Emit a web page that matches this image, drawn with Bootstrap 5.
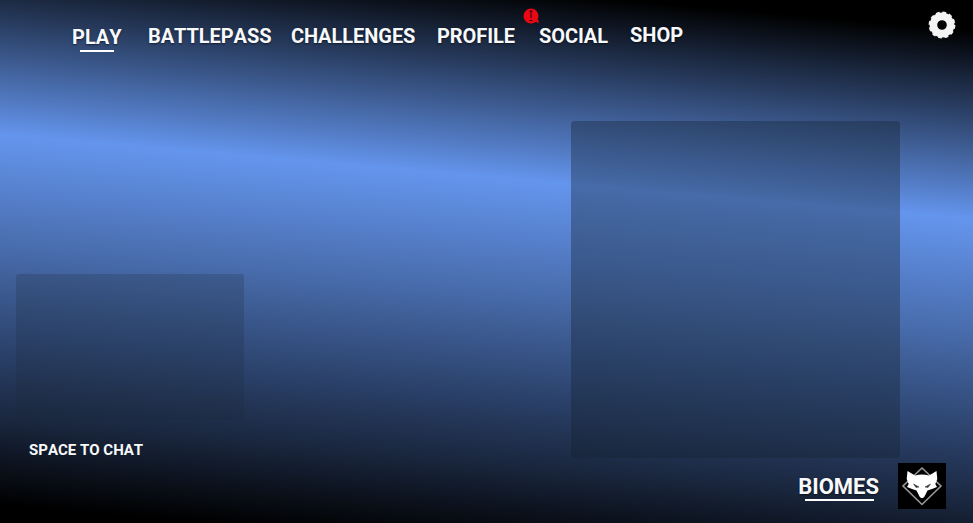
<!DOCTYPE html>
<html lang="en">
<head>
<meta charset="utf-8">
<meta name="viewport" content="width=device-width, initial-scale=1">
<title>Game Lobby</title>
<link href="https://cdn.jsdelivr.net/npm/bootstrap@5.3.0/dist/css/bootstrap.min.css" rel="stylesheet">
<style>
body{font-family:Roboto,"Liberation Sans",sans-serif;font-weight:700;font-kerning:none;color:#f8f9fb;background:#000}
.lobby{height:523px;background:linear-gradient(184.95deg,#000 0,#000 5%,#6495ed 36.1%,#4b70b2 53%,#2c436d 71%,#18243a 84%,#000 97%)}
.topbar{height:68px;padding:21px 16px 0 72px}
.menu-tab{font-size:20px;line-height:30px;color:inherit;text-decoration:none;white-space:nowrap;text-shadow:0 1px 2px #0008}
.menu-tab span{display:block}
.tab-play{width:76px;padding-top:1px}
.tab-pass{width:143px;letter-spacing:-.05px}
.tab-chal{width:146px;letter-spacing:-.05px}
.tab-prof{width:102px;letter-spacing:-.05px}
.tab-soc{width:91px;letter-spacing:-.05px}
.tab-shop{margin-top:-1px}
.rule{height:2px;background:#fff}
.rule-play{width:34px;margin:-2px 0 0 8px}
.alert-dot{left:-16px;top:-13px;width:16px;height:16px}
.gear{margin:-10px 1px 0 0}
.stage{height:390px;padding:53px 73px 0 16px}
.chat-col{width:228px;padding-top:153px}
.chat-box{height:146px;border-radius:3px;background:rgba(28,40,56,.22)}
.chat-hint{font-size:15px;line-height:20px;margin:20px 0 0 13px}
.party-box{width:329px;height:337px;border-radius:4px;background:rgba(20,32,46,.36)}
.footer-bar{padding:5px 27px 0 0}
.mode{font-size:22px;line-height:28px;margin:10px 19px 0 0;text-shadow:0 1px 2px #0008}
.rule-mode{width:69px;margin:-2px 0 0 7px}
</style>
</head>
<body>
<main class="lobby d-flex flex-column overflow-hidden">
  <nav class="topbar d-flex align-items-start">
    <a class="menu-tab tab-play" href="#"><span>PLAY</span><div class="rule rule-play"></div></a>
    <a class="menu-tab tab-pass" href="#">BATTLEPASS</a>
    <a class="menu-tab tab-chal" href="#">CHALLENGES</a>
    <a class="menu-tab tab-prof" href="#">PROFILE</a>
    <a class="menu-tab tab-soc position-relative" href="#">SOCIAL
      <svg class="alert-dot position-absolute" viewBox="0 0 16 16"><circle cx="8" cy="8" r="7.500" fill="#e90813"/><path d="M11 12h4.500v3.500z" fill="#e90813"/><path d="M6.500 3h3M8 3v7M6.500 12.500h3" stroke="#24070d"/></svg>
    </a>
    <a class="menu-tab tab-shop" href="#">SHOP</a>
    <svg class="gear ms-auto" width="28" height="28" viewBox="-14 -14 28 28"><circle r="8.600" fill="none" stroke="#f4f4f4" stroke-width="7.600"/><circle r="12.500" fill="none" stroke="#f4f4f4" stroke-width="1.800" stroke-dasharray="3.800 2.745"/></svg>
  </nav>
  <section class="stage d-flex justify-content-between">
    <div class="chat-col"><div class="chat-box"></div><div class="chat-hint">SPACE TO CHAT</div></div>
    <div class="party-box"></div>
  </section>
  <footer class="footer-bar d-flex justify-content-end align-items-start">
    <div class="mode">BIOMES<div class="rule rule-mode"></div></div>
    <svg width="48" height="46" viewBox="0 0 48 46"><path fill="#000" d="M0 0h48v46H0z"/><path d="M24 5 43 23 24 41.500 5 23z" fill="none" stroke="#999" stroke-width="1.600"/><path d="M9.500 8 17 12.500q7-2 14 0L38.500 8l.8 8-2 5 1.700 3-5 2-4.500 1.500-3 6L25 35h-2l-1.500-1.500-3-6L14 26l-5-2 1.700-3-2-5z" fill="#fff"/><path d="m15.500 21 5.500 3-3 .5zm17 0-5.500 3 3 .5z" fill="#333" stroke="#333" stroke-width=".5"/></svg>
  </footer>
</main>
<script src="https://cdn.jsdelivr.net/npm/bootstrap@5.3.0/dist/js/bootstrap.bundle.min.js"></script>
</body>
</html>
